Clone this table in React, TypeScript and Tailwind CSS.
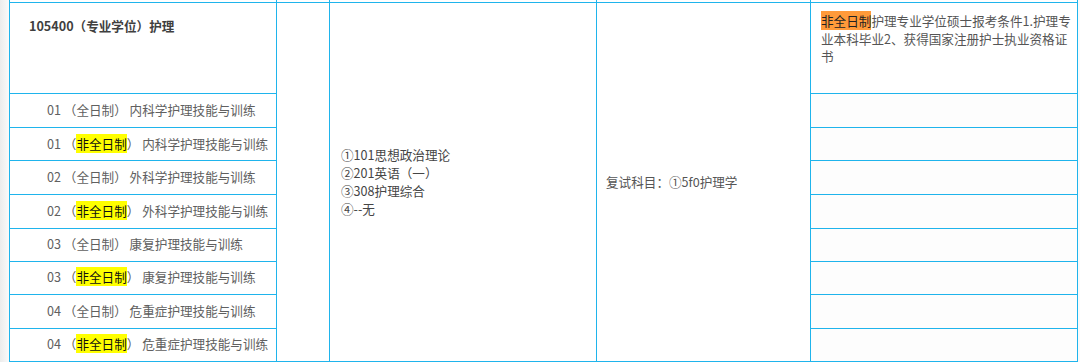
import React from "react";

const rows = [
  { no: "01", part: false, name: "内科学护理技能与训练", h: "h-[34px]" },
  { no: "01", part: true, name: "内科学护理技能与训练", h: "h-[33px]" },
  { no: "02", part: false, name: "外科学护理技能与训练", h: "h-[33px]" },
  { no: "02", part: true, name: "外科学护理技能与训练", h: "h-[34px]" },
  { no: "03", part: false, name: "康复护理技能与训练", h: "h-[33px]" },
  { no: "03", part: true, name: "康复护理技能与训练", h: "h-[33px]" },
  { no: "04", part: false, name: "危重症护理技能与训练", h: "h-[34px]" },
  { no: "04", part: true, name: "危重症护理技能与训练", h: "h-[33px]" },
];

const cell = "border border-[#1fb4ec] p-0";

const App = () => {
  return (
    <div className="flex w-[1080px] h-[362px] overflow-hidden bg-white font-['Noto_Sans_CJK_SC','Noto_Sans',sans-serif] text-[12.6px]">
      <div className="w-[9px] shrink-0 bg-gradient-to-r from-[#ececec] to-[#fafafa]" />
      <table className="table-fixed border-collapse w-[1068px] shrink-0 -mt-[1px]">
        <colgroup>
          <col className="w-[267px]" />
          <col className="w-[53px]" />
          <col className="w-[267px]" />
          <col className="w-[214px]" />
          <col className="w-[267px]" />
        </colgroup>
        <tbody>
          <tr className="h-[3px]">
            <td className={cell} />
            <td className={cell} />
            <td className={cell} />
            <td className={cell} />
            <td className={cell} />
          </tr>
          <tr className="h-[91px]">
            <td className={`${cell} align-top pl-[19px] pt-[14px] font-bold text-[#3f3f3f]`}>
              105400（专业学位）护理
            </td>
            <td className={cell} rowSpan={9} />
            <td className={`${cell} align-middle pl-[11px] leading-[18px] text-[#454545]`} rowSpan={9}>
              <div>①101思想政治理论</div>
              <div>②201英语（一）</div>
              <div>③308护理综合</div>
              <div>④--无</div>
            </td>
            <td className={`${cell} align-middle pl-[9px] text-[#555555]`} rowSpan={9}>
              复试科目：①5f0护理学
            </td>
            <td className={`${cell} align-top pl-[10px] pr-[4px] pt-[9px] leading-[17.5px] text-[#555555]`}>
              <span className="bg-[#ff9a3a] text-[#222222]">非全日制</span>
              护理专业学位硕士报考条件1.护理专业本科毕业2、获得国家注册护士执业资格证书
            </td>
          </tr>
          {rows.map((r, i) => (
            <tr key={i} className={r.h}>
              <td className={`${cell} align-middle pl-[37px] text-[#606060] whitespace-nowrap`}>
                {r.no} （
                {r.part ? (
                  <span className="bg-[#ffff00] text-[#111111]">非全日制</span>
                ) : (
                  "全日制"
                )}
                ） {r.name}
              </td>
              <td className={`${cell} bg-[#fdfdfd]`} />
            </tr>
          ))}
        </tbody>
      </table>
      <div className="flex-1 bg-[#fafafa]" />
    </div>
  );
};

export default App;
